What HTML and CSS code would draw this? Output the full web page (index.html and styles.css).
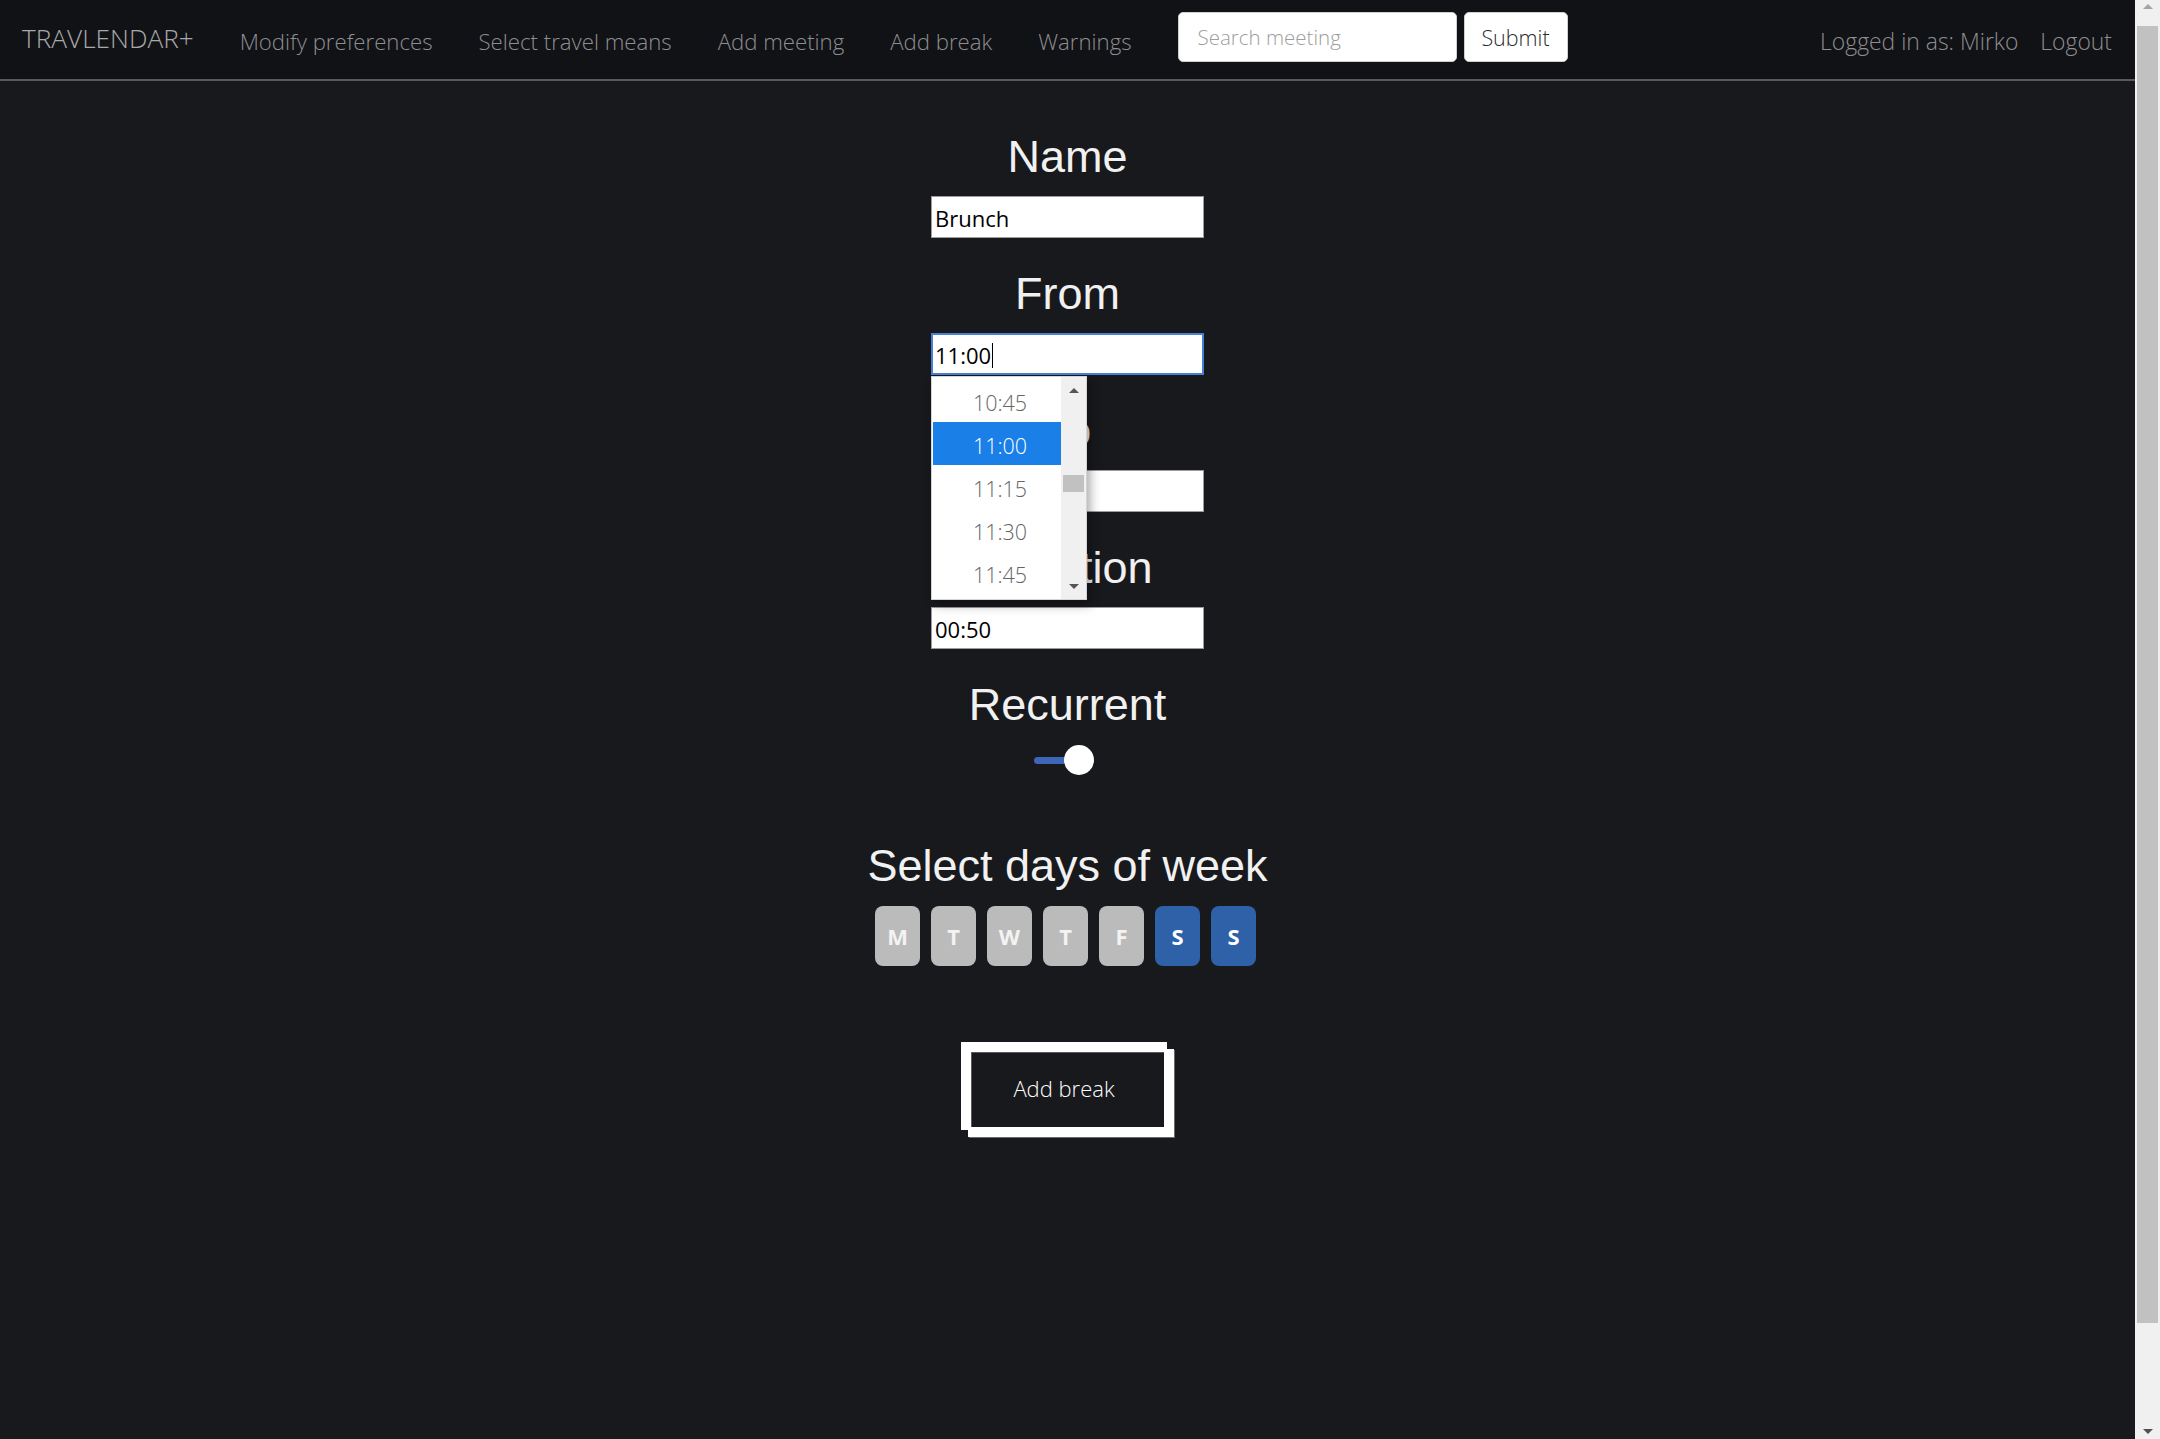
FILE: index.html
```html
<!DOCTYPE html>
<html lang="en">
<head>
<meta charset="utf-8">
<title>Travlendar+ — Add break</title>
<link rel="stylesheet" href="styles.css">
</head>
<body>
<div class="app">
  <div class="page">
    <nav class="navbar">
      <a class="brand" href="#">TRAVLENDAR+</a>
      <ul class="nav-links">
        <li><a href="#">Modify preferences</a></li>
        <li><a href="#">Select travel means</a></li>
        <li><a href="#">Add meeting</a></li>
        <li><a href="#">Add break</a></li>
        <li><a href="#">Warnings</a></li>
      </ul>
      <form class="search">
        <input class="search-input" type="text" placeholder="Search meeting">
        <button class="search-btn" type="button">Submit</button>
      </form>
      <div class="nav-right">
        <span class="user">Logged in as: Mirko</span>
        <a href="#" class="logout">Logout</a>
      </div>
    </nav>

    <main class="form">
      <section class="field">
        <h3 class="label">Name</h3>
        <div class="input">Brunch</div>
      </section>

      <section class="field">
        <h3 class="label">From</h3>
        <div class="picker">
          <div class="input input-focus">11:00<span class="caret"></span></div>
          <div class="timelist">
            <ul class="times">
              <li>10:45</li>
              <li class="sel">11:00</li>
              <li>11:15</li>
              <li>11:30</li>
              <li>11:45</li>
            </ul>
            <div class="list-sb">
              <span class="arr-up"></span>
              <span class="list-thumb"></span>
              <span class="arr-down"></span>
            </div>
          </div>
        </div>
      </section>

      <section class="field">
        <h3 class="label">To</h3>
        <div class="input"></div>
      </section>

      <section class="field">
        <h3 class="label">Duration</h3>
        <div class="input">00:50</div>
      </section>

      <section class="field field-recurrent">
        <h3 class="label">Recurrent</h3>
        <div class="switch"><span class="track"></span><span class="knob"></span></div>
      </section>

      <section class="field field-days">
        <h3 class="label">Select days of week</h3>
        <div class="days">
          <span class="day">M</span>
          <span class="day">T</span>
          <span class="day">W</span>
          <span class="day">T</span>
          <span class="day">F</span>
          <span class="day on">S</span>
          <span class="day on">S</span>
        </div>
      </section>

      <button class="add-btn" type="button">Add break</button>
    </main>
  </div>

  <div class="scrollbar">
    <span class="sb-up"></span>
    <span class="sb-thumb"></span>
    <span class="sb-down"></span>
  </div>
</div>
</body>
</html>
```

FILE: styles.css
```css
html, body {
  margin: 0;
  padding: 0;
  height: 100%;
}
body {
  background: #18191d;
  font-family: "Open Sans", "Liberation Sans", sans-serif;
  overflow: hidden;
}
.app {
  display: flex;
  height: 100vh;
}
.page {
  flex: 1;
  min-width: 0;
}

/* ---------- navbar ---------- */
.navbar {
  display: flex;
  align-items: center;
  height: 79px;
  padding: 0 23px 0 22px;
  background: #111216;
  border-bottom: 2px solid #58595b;
}
.brand {
  font-size: 26.2px;
  font-weight: 300;
  color: #a9a9aa;
  text-decoration: none;
  margin: 0 46px 3px 0;
}
.nav-links {
  display: flex;
  gap: 46px;
  list-style: none;
  margin: 0;
  padding: 4px 0 0;
}
.nav-links a {
  font-size: 22.2px;
  font-weight: 300;
  color: #8e8e90;
  text-decoration: none;
}
.nav-right a,
.nav-right span {
  font-size: 22.9px;
  font-weight: 300;
  color: #8e8e90;
  text-decoration: none;
}
.search {
  display: flex;
  gap: 7px;
  margin: 0 0 5px 46px;
}
.search-input {
  box-sizing: border-box;
  width: 279px;
  height: 50px;
  border: 1px solid #cfcfcf;
  border-radius: 5px;
  padding: 0 19px;
  font-family: "Open Sans", sans-serif;
  font-size: 20.5px;
  font-weight: 300;
  color: #333;
  background: #fff;
}
.search-input::placeholder {
  color: #9d9d9d;
}
.search-btn {
  box-sizing: border-box;
  width: 104px;
  height: 50px;
  border: 1px solid #cfcfcf;
  border-radius: 5px;
  background: #fff;
  font-family: "Open Sans", sans-serif;
  font-size: 21.5px;
  font-weight: 300;
  color: #2b2b2b;
  padding: 0;
}
.nav-right {
  margin-left: auto;
  display: flex;
  gap: 22px;
  padding-top: 4px;
}

/* ---------- form ---------- */
.form {
  display: flex;
  flex-direction: column;
  align-items: center;
  padding-top: 49.5px;
}
.field {
  display: flex;
  flex-direction: column;
  align-items: center;
  margin-bottom: 29.6px;
}
.label {
  margin: 0 0 13px;
  font-family: "Liberation Sans", Arial, sans-serif;
  font-size: 45px;
  line-height: 52.5px;
  font-weight: 400;
  color: #f1f1f1;
}
.input {
  box-sizing: border-box;
  width: 273px;
  height: 42px;
  display: flex;
  align-items: center;
  padding: 2px 3px 0;
  background: #fff;
  border: 1px solid #9c9c9c;
  font-size: 22px;
  color: #000;
}
.input-focus {
  border: 2px solid #4a7fd6;
  padding: 2px 2px 0;
}
.caret {
  display: inline-block;
  width: 1px;
  height: 25px;
  background: #000;
  margin-left: 1px;
}

/* time picker dropdown (overlays the fields below) */
.picker {
  position: relative;
  z-index: 2;
}
.timelist {
  position: absolute;
  top: calc(100% + 1px);
  left: 0;
  width: 156px;
  height: 224px;
  box-sizing: border-box;
  display: flex;
  background: #fff;
  border: 1px solid #d4d4d4;
  box-shadow: 3px 5px 10px rgba(0, 0, 0, 0.35);
}
.times {
  flex: 1;
  list-style: none;
  margin: 0;
  padding: 2px 0 0 1px;
  overflow: hidden;
}
.times li {
  box-sizing: border-box;
  height: 43px;
  display: flex;
  align-items: center;
  justify-content: center;
  padding: 3px 0 0 6px;
  font-size: 21.5px;
  font-weight: 300;
  color: #666;
}
.times li.sel {
  background: #1a80e8;
  color: #fff;
}
.list-sb {
  width: 25px;
  background: #f0f0f0;
  display: flex;
  flex-direction: column;
  align-items: center;
}
.arr-up,
.sb-up {
  width: 0;
  height: 0;
  border-left: 5px solid transparent;
  border-right: 5px solid transparent;
  border-bottom: 5px solid #555;
}
.arr-down,
.sb-down {
  width: 0;
  height: 0;
  border-left: 5px solid transparent;
  border-right: 5px solid transparent;
  border-top: 5px solid #555;
}
.arr-up {
  margin-top: 11px;
}
.list-thumb {
  width: 21px;
  height: 17px;
  background: #c1c1c1;
  margin-top: 82px;
}
.arr-down {
  margin-top: auto;
  margin-bottom: 10px;
}

/* switch */
.field-recurrent {
  margin-bottom: 65px;
}
.field-recurrent .label {
  margin-bottom: 14px;
}
.switch {
  display: flex;
  align-items: center;
  margin-right: 7px;
}
.track {
  width: 45px;
  height: 7px;
  border-radius: 4px;
  background: #3d66b8;
}
.knob {
  width: 30px;
  height: 30px;
  border-radius: 50%;
  background: #fff;
  margin-left: -15px;
}

/* days */
.field-days {
  margin-bottom: 76px;
}
.days {
  display: flex;
  gap: 11px;
  margin-right: 4px;
}
.day {
  width: 45px;
  height: 60px;
  border-radius: 8px;
  background: #bbbbbb;
  color: #f3f3f3;
  display: flex;
  align-items: center;
  justify-content: center;
  font-size: 22px;
  font-weight: 700;
}
.day.on {
  background: #2f61a9;
  color: #fff;
}

/* add break button */
.add-btn {
  box-sizing: border-box;
  width: 206px;
  height: 88px;
  margin-right: 7px;
  border-style: solid;
  border-color: #fff;
  border-width: 10px 3px 3px 10px;
  background: #18191d;
  color: #fff;
  font-family: "Open Sans", sans-serif;
  font-size: 22px;
  font-weight: 300;
  padding: 0 7px 2px 0;
  box-shadow: inset 1px 1px 0 #5a5a5a, 7px 7px 0 #fff, 8px 8px 0 #6a6a6a;
}

/* window scrollbar */
.scrollbar {
  width: 25px;
  flex: none;
  background: #f0f0f0;
  display: flex;
  flex-direction: column;
  align-items: center;
}
.sb-up {
  margin-top: 4px;
  border-bottom-color: #a3a3a3;
}
.sb-thumb {
  width: 21px;
  height: 1297px;
  margin-top: 17px;
  background: #c1c1c1;
}
.sb-down {
  margin-top: auto;
  margin-bottom: 5px;
  border-top-color: #505050;
}
```
